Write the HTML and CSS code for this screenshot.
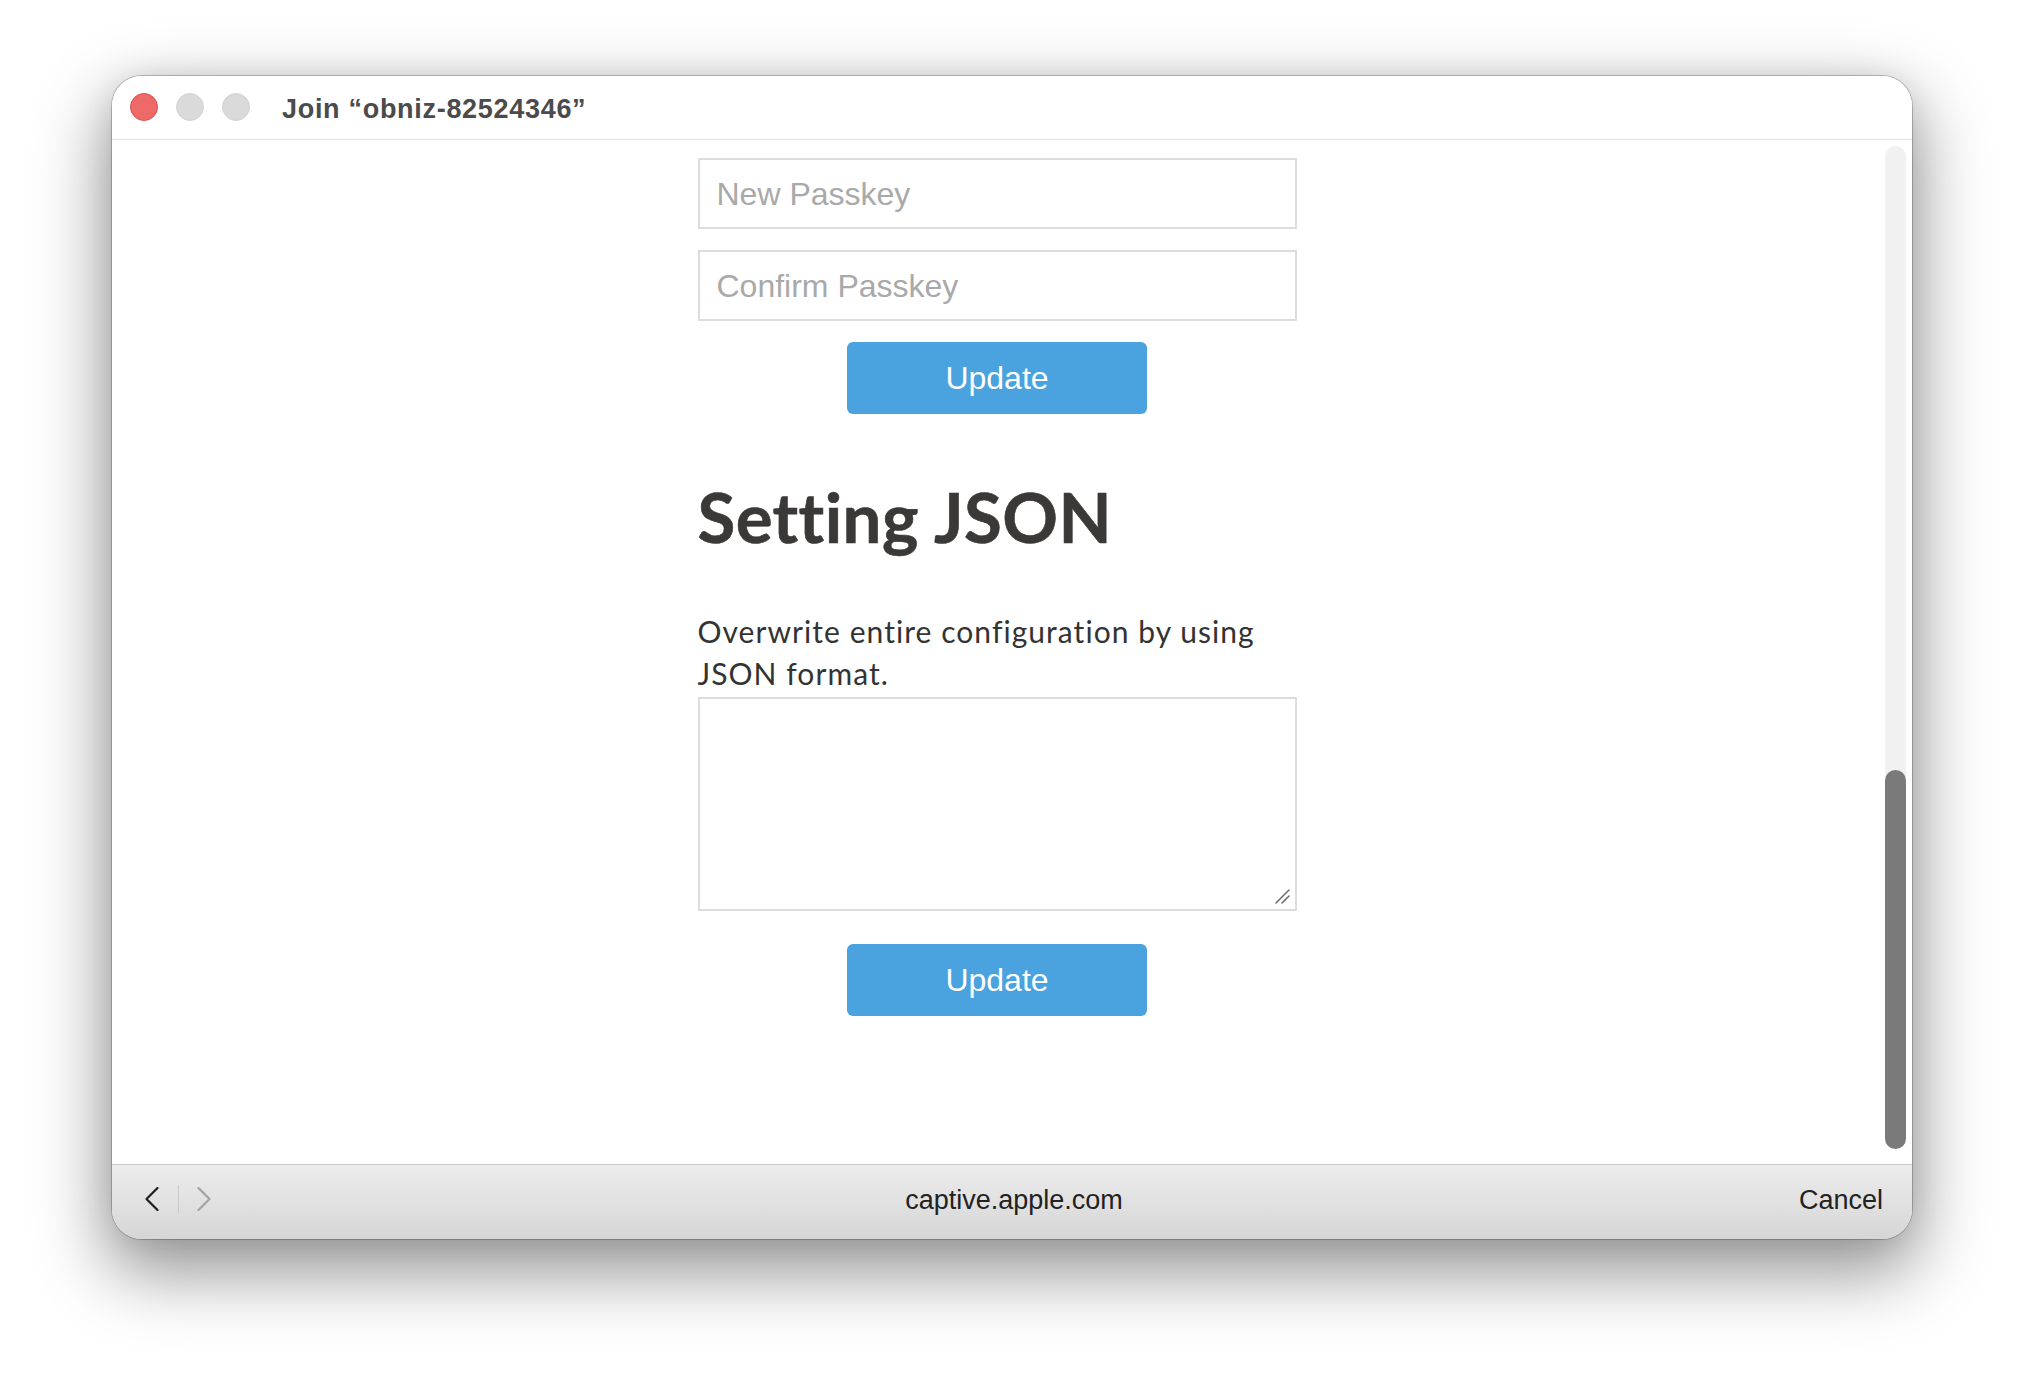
FILE: index.html
```html
<!DOCTYPE html>
<html lang="en">
<head>
<meta charset="utf-8">
<title>Join “obniz-82524346”</title>
<link rel="stylesheet" href="styles.css">
</head>
<body>
<div class="window">
  <div class="titlebar">
    <div class="lights">
      <span class="light light-close"></span>
      <span class="light light-min"></span>
      <span class="light light-max"></span>
    </div>
    <div class="title">Join “obniz-82524346”</div>
  </div>
  <div class="content">
    <div class="viewport">
      <div class="column">
        <input class="field" type="password" placeholder="New Passkey">
        <input class="field field-second" type="password" placeholder="Confirm Passkey">
        <button class="btn btn-first" type="button">Update</button>
        <h1 class="heading">Setting JSON</h1>
        <p class="desc">Overwrite entire configuration by using JSON format.</p>
        <div class="area-wrap">
          <textarea class="area"></textarea>
          <svg class="grip" width="16" height="16" viewBox="0 0 16 16"><path d="M2 15 L15 2 M8 15 L15 8" stroke="#6f6f6f" stroke-width="1.6" stroke-linecap="round" fill="none"/></svg>
        </div>
        <button class="btn btn-second" type="button">Update</button>
      </div>
    </div>
    <div class="gutter">
      <div class="track"><div class="thumb"></div></div>
    </div>
  </div>
  <div class="footer">
    <div class="nav">
      <svg class="chev" width="14" height="24" viewBox="0 0 14 24"><polyline points="12.5,1 1.5,12 12.5,23" fill="none" stroke="#1f1f1f" stroke-width="2.2" stroke-linecap="round" stroke-linejoin="round"/></svg>
      <span class="nav-sep"></span>
      <svg class="chev" width="14" height="24" viewBox="0 0 14 24"><polyline points="1.5,1 12.5,12 1.5,23" fill="none" stroke="#a3a3a3" stroke-width="2.2" stroke-linecap="round" stroke-linejoin="round"/></svg>
    </div>
    <div class="url">captive.apple.com</div>
    <div class="cancel">Cancel</div>
  </div>
</div>
</body>
</html>
```
FILE: styles.css
```css
html, body {
  margin: 0;
  padding: 0;
}
body {
  background: #ffffff;
  width: 2024px;
  height: 1388px;
  overflow: hidden;
  font-family: "Liberation Sans", Arial, sans-serif;
}
.window {
  margin: 76px 0 0 112px;
  width: 1800px;
  height: 1163px;
  border-radius: 30px;
  overflow: hidden;
  background: #ffffff;
  display: flex;
  flex-direction: column;
  box-shadow: 0 0 0 1px rgba(0, 0, 0, 0.22), 0 28px 70px 6px rgba(0, 0, 0, 0.42), 0 0 30px rgba(0,0,0,0.08);
}
.titlebar {
  box-sizing: border-box;
  height: 64px;
  flex: none;
  border-bottom: 1px solid #e2e2e2;
  display: flex;
  align-items: center;
  padding-left: 18px;
  background: #ffffff;
}
.lights {
  display: flex;
  gap: 18px;
  margin-top: -1px;
}
.light {
  box-sizing: border-box;
  width: 28px;
  height: 28px;
  border-radius: 50%;
  background: #dadada;
  border: 1px solid #d2d2d2;
}
.light-close {
  background: #ee6a69;
  border-color: #d9504e;
}
.title {
  margin-left: 32px;
  margin-top: 4px;
  font-size: 27px;
  font-weight: 700;
  letter-spacing: 0.7px;
  color: #4b4b4b;
}
.content {
  flex: 1;
  display: flex;
  min-height: 0;
}
.viewport {
  flex: 1;
  display: flex;
  justify-content: center;
}
.column {
  width: 599px;
  padding-top: 18px;
  display: flex;
  flex-direction: column;
}
.field {
  box-sizing: border-box;
  width: 599px;
  height: 71px;
  border: 2px solid #dcdcdc;
  border-radius: 0;
  padding: 2px 17px 0 17px;
  margin: 0;
  font-family: "Liberation Sans", Arial, sans-serif;
  font-size: 32px;
  color: #333;
  background: #fff;
  outline: none;
}
.field::placeholder {
  color: #a9a9a9;
}
.field-second {
  margin-top: 21px;
}
.btn {
  align-self: center;
  width: 300px;
  height: 72px;
  border: none;
  border-radius: 6px;
  background: #4aa2de;
  color: #ffffff;
  font-family: "Liberation Sans", Arial, sans-serif;
  font-size: 32px;
  padding: 0;
  margin: 0;
}
.btn-first {
  margin-top: 21px;
}
.heading {
  margin: 62px 0 0 0;
  font-family: Lato, "Noto Sans", sans-serif;
  font-weight: 700;
  font-size: 69px;
  line-height: 82px;
  letter-spacing: 0.4px;
  font-variant-ligatures: none;
  color: #3b3838;
  -webkit-text-stroke: 0.6px #3b3838;
}
.desc {
  margin: 52px 0 0 0;
  font-family: Lato, "Noto Sans", sans-serif;
  font-size: 30px;
  line-height: 42px;
  letter-spacing: 1.05px;
  font-variant-ligatures: none;
  color: #333333;
}
.area-wrap {
  position: relative;
  margin-top: 3px;
  height: 214px;
}
.area {
  box-sizing: border-box;
  display: block;
  width: 599px;
  height: 214px;
  border: 2px solid #dcdcdc;
  border-radius: 0;
  margin: 0;
  padding: 10px 17px;
  resize: none;
  outline: none;
  font-family: "Liberation Mono", monospace;
  font-size: 26px;
}
.grip {
  position: absolute;
  right: 7px;
  bottom: 7px;
}
.btn-second {
  margin-top: 33px;
}
.gutter {
  flex: none;
  width: 30px;
  padding: 6px 0 15px 0;
  box-sizing: border-box;
  display: flex;
}
.track {
  margin-left: 3px;
  width: 21px;
  flex: none;
  border-radius: 11px;
  background: #f1f1f1;
  display: flex;
  flex-direction: column;
  justify-content: flex-end;
}
.thumb {
  height: 379px;
  border-radius: 11px;
  background: #7a7a7a;
}
.footer {
  box-sizing: border-box;
  height: 75px;
  flex: none;
  border-top: 1px solid #c9c9c9;
  background: linear-gradient(#ececec, #d6d6d6);
  display: grid;
  grid-template-columns: 1fr auto 1fr;
  align-items: center;
  padding: 0 29px 4px 33px;
  font-size: 27px;
  color: #222222;
}
.nav {
  display: flex;
  align-items: center;
  gap: 0;
  margin-top: -2px;
}
.nav-sep {
  width: 1px;
  height: 28px;
  background: #cacaca;
  margin: 0 18px 0 19px;
}
.chev {
  display: block;
}
.url {
  text-align: center;
}
.cancel {
  text-align: right;
}
```
